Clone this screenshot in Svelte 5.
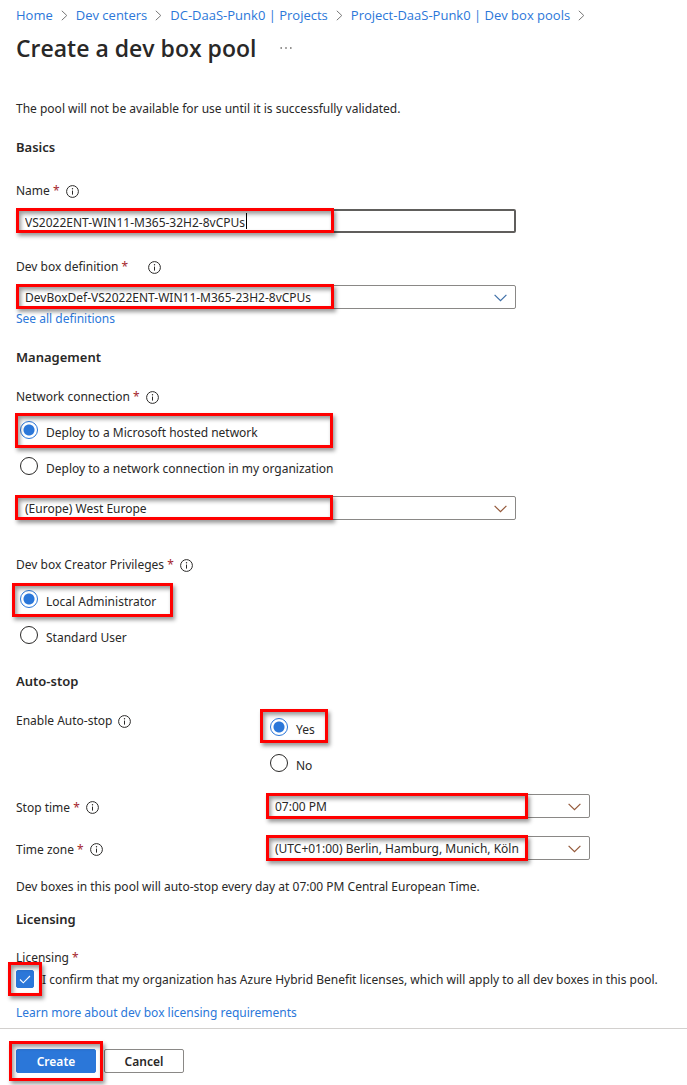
<script>
  const crumbs = ['Home', 'Dev centers', 'DC-DaaS-Punk0 | Projects', 'Project-DaaS-Punk0 | Dev box pools'];
  let poolName = $state('VS2022ENT-WIN11-M365-32H2-8vCPUs');
  let network = $state('hosted');
  let privilege = $state('admin');
  let autoStop = $state('yes');
  let confirmed = $state(true);
</script>

{#snippet info()}
  <svg class="info" viewBox="0 0 13 13" aria-hidden="true">
    <circle cx="6.5" cy="6.5" r="5.9" fill="none" stroke="currentColor" />
    <path d="M6.5 5.6v4" stroke="currentColor" fill="none" />
    <circle cx="6.5" cy="3.8" r="0.7" fill="currentColor" />
  </svg>
{/snippet}

{#snippet chevron(tint)}
  <svg class="chevron {tint}" viewBox="0 0 13 8" aria-hidden="true">
    <path d="M0.6 0.8L6.5 6.7L12.4 0.8" fill="none" stroke="currentColor" stroke-width="1.2" />
  </svg>
{/snippet}

<main>
  <header>
    <nav aria-label="Breadcrumb">
      {#each crumbs as crumb}
        <a href="#top">{crumb}</a>
        <svg class="sep" viewBox="0 0 7 11" aria-hidden="true">
          <path d="M0.8 0.8L5.8 5.5L0.8 10.2" fill="none" stroke="currentColor" />
        </svg>
      {/each}
    </nav>
    <div class="title">
      <h1>Create a dev box pool</h1>
      <button class="more" aria-label="More actions">
        <svg viewBox="0 0 12 2" aria-hidden="true">
          <path d="M0.5 1h1.4M5.3 1h1.4M10.1 1h1.4" stroke="currentColor" stroke-width="1.4" />
        </svg>
      </button>
    </div>
  </header>

  <form onsubmit={(e) => e.preventDefault()}>
    <p class="intro">The pool will not be available for use until it is successfully validated.</p>

    <section class="basics">
      <h2>Basics</h2>
      <div class="label"><label for="name">Name <b>*</b></label>{@render info()}</div>
      <div class="control">
        <input class="box name" id="name" type="text" bind:value={poolName} />
        <span class="caret"></span>
        <span class="mark wide"></span>
      </div>
      <div class="label spaced"><label for="definition">Dev box definition <b>*</b></label>{@render info()}</div>
      <div class="control">
        <select class="box" id="definition"><option>DevBoxDef-VS2022ENT-WIN11-M365-23H2-8vCPUs</option></select>
        {@render chevron('cool')}
        <span class="mark wide"></span>
      </div>
      <a href="#definitions">See all definitions</a>
    </section>

    <section class="management">
      <h2>Management</h2>
      <div class="label" id="network-label"><span>Network connection <b>*</b></span>{@render info()}</div>
      <div class="radios" role="radiogroup" aria-labelledby="network-label">
        <label class="choice"><input type="radio" value="hosted" bind:group={network} /><span>Deploy to a Microsoft hosted network</span><i class="mark hosted"></i></label>
        <label class="choice"><input type="radio" value="own" bind:group={network} /><span>Deploy to a network connection in my organization</span></label>
      </div>
      <div class="control">
        <select class="box" aria-label="Region"><option>(Europe) West Europe</option></select>
        {@render chevron('warm')}
        <span class="mark region"></span>
      </div>
      <div class="label creator" id="privilege-label"><span>Dev box Creator Privileges <b>*</b></span>{@render info()}</div>
      <div class="radios" role="radiogroup" aria-labelledby="privilege-label">
        <label class="choice"><input type="radio" value="admin" bind:group={privilege} /><span>Local Administrator</span><i class="mark admin"></i></label>
        <label class="choice"><input type="radio" value="user" bind:group={privilege} /><span>Standard User</span></label>
      </div>
    </section>

    <section class="autostop">
      <h2>Auto-stop</h2>
      <div class="pairs">
        <div class="label top" id="auto-label">Enable Auto-stop{@render info()}</div>
        <div class="radios" role="radiogroup" aria-labelledby="auto-label">
          <label class="choice"><input type="radio" value="yes" bind:group={autoStop} /><span>Yes</span><i class="mark yes"></i></label>
          <label class="choice"><input type="radio" value="no" bind:group={autoStop} /><span>No</span></label>
        </div>
        <div class="label low"><label for="stop">Stop time <b>*</b></label>{@render info()}</div>
        <div class="control">
          <select class="box" id="stop"><option>07:00 PM</option></select>
          {@render chevron('warm')}
          <span class="mark time"></span>
        </div>
        <div class="label low"><label for="zone">Time zone <b>*</b></label>{@render info()}</div>
        <div class="control">
          <select class="box" id="zone"><option>(UTC+01:00) Berlin, Hamburg, Munich, Köln</option></select>
          {@render chevron('warm')}
          <span class="mark time"></span>
        </div>
      </div>
      <p>Dev boxes in this pool will auto-stop every day at 07:00 PM Central European Time.</p>
    </section>

    <section class="licensing">
      <h2>Licensing</h2>
      <div class="label"><span>Licensing <b>*</b></span></div>
      <label class="confirm">
        <span class="tick">
          <input type="checkbox" bind:checked={confirmed} />
          <svg viewBox="0 0 18 18" aria-hidden="true"><path d="M4 9.5L7.3 12.8L14 6" fill="none" stroke="#fff" stroke-width="1.1" /></svg>
          <i class="mark around"></i>
        </span>
        <span class="statement">I confirm that my organization has Azure Hybrid Benefit licenses, which will apply to all dev boxes in this pool.</span>
      </label>
      <a href="#licensing">Learn more about dev box licensing requirements</a>
    </section>

    <footer>
      <div class="create"><button class="primary">Create</button><span class="mark around"></span></div>
      <button type="button" class="secondary">Cancel</button>
    </footer>
  </form>
</main>

<style>
  :global(body) { margin: 0; background: #fff; }
  main { font: 12px/18px "Noto Sans", "Open Sans", sans-serif; color: #292827; }
  h1, h2, p { margin: 0; }
  a { color: #2b77d9; text-decoration: none; }
  header { padding: 6px 16px 0; font-family: "Open Sans", "Noto Sans", sans-serif; }
  nav { display: flex; align-items: center; gap: 8px; font-size: 13px; white-space: nowrap; }
  .sep { width: 7px; height: 11px; color: #777; flex: none; }
  .title { display: flex; align-items: center; gap: 24px; margin-top: 8px; }
  h1 { font-size: 23px; line-height: 32px; font-weight: 600; }
  .more { border: 0; background: none; padding: 0; width: 12px; height: 18px; color: #605e5c; display: flex; align-items: center; }
  .more svg { width: 12px; height: 2px; }
  .intro { padding: 36px 16px 0; }
  section { padding: 20px 16px 0; }
  h2 { font-size: 13px; line-height: 18px; font-weight: 600; }
  .label { display: flex; align-items: center; gap: 6px; }
  b { color: #a4262c; font-weight: 400; }
  .info { width: 13px; height: 13px; flex: none; }
  .control { position: relative; max-width: 500px; height: 24px; }
  .box { box-sizing: border-box; width: 100%; height: 24px; margin: 0; padding: 2px 8px 0; border: 1px solid #8a8886; border-radius: 2px; background: #fff; color: inherit; font: inherit; appearance: none; display: block; outline: 0; }
  .name { border: 2px solid #605e5c; padding: 2px 7px 0; }
  .caret { position: absolute; left: 230px; top: 4px; width: 1px; height: 16px; background: #000; }
  .chevron { position: absolute; right: 9px; top: 9px; width: 13px; height: 8px; pointer-events: none; }
  .cool { color: #3f6fa8; }
  .warm { color: #94593a; }
  .mark { position: absolute; box-sizing: border-box; border: 3px solid #f00; box-shadow: 2px 3px 4px rgba(0, 0, 0, .4), inset 2px 3px 4px rgba(0, 0, 0, .4); pointer-events: none; }
  .wide { left: 0; top: -1px; width: 318px; height: 25px; }
  .region { left: -1px; top: -1px; width: 318px; height: 25px; }
  .time { left: 0; top: -1px; width: 262px; height: 26px; }
  .hosted { left: -1px; top: -8px; width: 318px; height: 35px; }
  .admin { left: -4px; top: -7px; width: 161px; height: 34px; }
  .yes { left: -6px; top: -9px; width: 68px; height: 34px; }
  .around { inset: -8px; }
  .create .around { inset: -8px -7px; }
  .radios { display: grid; gap: 18px; }
  .choice { position: relative; display: flex; gap: 8px; height: 18px; padding-left: 4px; }
  .choice span { padding-top: 3px; }
  input[type='radio'] { appearance: none; box-sizing: border-box; flex: none; margin: 0; width: 18px; height: 18px; border: 1px solid #292827; border-radius: 50%; background: #fff; }
  input[type='radio']:checked { border-color: #2b77d9; background: radial-gradient(circle, #2b77d9 5px, #fff 6px); }
  .basics .label { margin: 26px 0 9px; }
  .basics .spaced { margin-top: 25px; gap: 20px; }
  .basics a { display: block; padding-top: 1px; }
  .management { padding-top: 20px; }
  .management h2, .autostop h2 { margin-bottom: 22px; }
  .management .radios { margin: 15px 0 21px; }
  .management .creator { margin-top: 36px; }
  .management .creator + .radios { margin: 16px 0 0; }
  .autostop { padding-top: 28px; }
  .pairs { display: grid; grid-template-columns: 250px minmax(0, 324px); row-gap: 18px; }
  .pairs .top { align-self: start; }
  .pairs .low { padding-top: 3px; }
  .pairs .radios { padding: 6px 0 4px; }
  .autostop p { margin-top: 18px; }
  .licensing { padding-top: 14px; }
  .licensing h2 { margin-bottom: 21px; }
  .confirm { display: flex; gap: 8px; margin: 3px 0 15px; }
  .statement { padding-top: 1px; }
  .tick { position: relative; width: 18px; height: 18px; flex: none; }
  .tick input { appearance: none; display: block; margin: 0; width: 18px; height: 18px; border: 1px solid #292827; border-radius: 2px; box-sizing: border-box; }
  .tick input:checked { background: #2b77d9; border-color: #2b77d9; }
  .tick svg { position: absolute; inset: 0; pointer-events: none; }
  .licensing a { display: block; }
  footer { display: flex; gap: 8px; margin-top: 6px; padding: 20px 16px 12px; border-top: 1px solid #d2d0ce; }
  .create { position: relative; }
  footer button { box-sizing: border-box; display: block; min-width: 80px; height: 24px; padding: 2px 16px 0; border: 1px solid #8a8886; border-radius: 2px; background: #fff; color: inherit; font: 600 12px/18px "Noto Sans", "Open Sans", sans-serif; }
  footer .primary { background: #2b77d9; border-color: #2b77d9; color: #fff; }
</style>
